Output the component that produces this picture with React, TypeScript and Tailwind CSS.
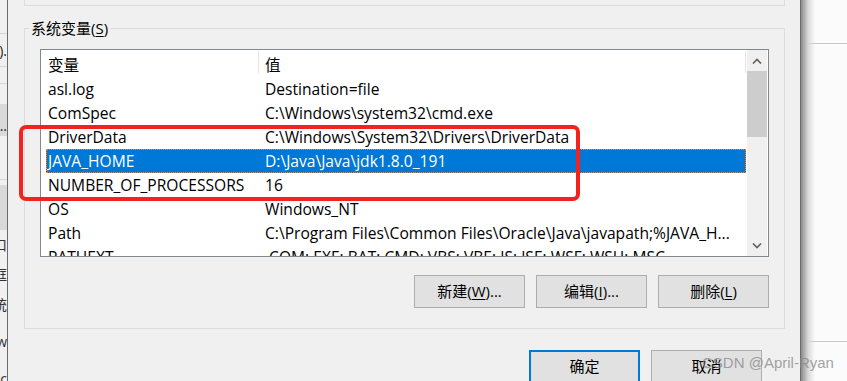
import React from 'react';

interface EnvVar {
  name: string;
  value: string;
}

const vars: EnvVar[] = [
  { name: 'asl.log', value: 'Destination=file' },
  { name: 'ComSpec', value: 'C:\\Windows\\system32\\cmd.exe' },
  { name: 'DriverData', value: 'C:\\Windows\\System32\\Drivers\\DriverData' },
  { name: 'JAVA_HOME', value: 'D:\\Java\\Java\\jdk1.8.0_191' },
  { name: 'NUMBER_OF_PROCESSORS', value: '16' },
  { name: 'OS', value: 'Windows_NT' },
  { name: 'Path', value: 'C:\\Program Files\\Common Files\\Oracle\\Java\\javapath;%JAVA_H...' },
  { name: 'PATHEXT', value: '.COM;.EXE;.BAT;.CMD;.VBS;.VBE;.JS;.JSE;.WSF;.WSH;.MSC' },
];

const SELECTED = 'JAVA_HOME';

function WinButton({ label, hotkey, suffix, primary }: { label: string; hotkey?: string; suffix?: string; primary?: boolean }) {
  return (
    <div
      className={`w-[111px] h-[33px] flex items-center justify-center text-[15px] text-black bg-[#e1e1e1] ${
        primary ? 'border-2 border-[#0078d7]' : 'border border-[#adadad]'
      }`}
    >
      <span>
        {label}
        {hotkey && (
          <>
            (<span className="underline underline-offset-2">{hotkey}</span>)
          </>
        )}
        {suffix}
      </span>
    </div>
  );
}

function ScrollArrow({ down }: { down?: boolean }) {
  return (
    <div className="h-[21px] flex items-center justify-center">
      <svg width="10" height="6" viewBox="0 0 10 6" className={down ? 'rotate-180' : ''}>
        <path d="M1 5.5 L5 1.5 L9 5.5" fill="none" stroke="#606060" strokeWidth="1.6" />
      </svg>
    </div>
  );
}

function BackWindow() {
  // sliver of the window behind the dialog, on the left edge
  return (
    <div className="w-[7px] h-full bg-[#f0f0f0] flex flex-col overflow-hidden text-[14px] text-[#222]">
      <div className="h-[34px] border-b border-[#d6d6d6] shrink-0" />
      <div className="h-[33px] border-b border-[#d6d6d6] shrink-0 flex justify-end items-center whitespace-nowrap">
        <span>(S).</span>
      </div>
      <div className="h-[17px] border-b border-[#d6d6d6] shrink-0" />
      <div className="h-[20px] shrink-0" />
      <div className="h-[32px] bg-[#d9d9d9] shrink-0 flex justify-end items-end whitespace-nowrap leading-[20px]">
        <span>...</span>
      </div>
      <div className="h-[44px] border-b border-[#d6d6d6] shrink-0" />
      <div className="h-[5px] shrink-0" />
      <div className="h-[45px] bg-[#d9d9d9] shrink-0" />
      <div className="flex flex-col items-end whitespace-nowrap leading-[30px] text-[#333]">
        <span>窗口</span>
        <span>量框</span>
        <span>系统</span>
        <span className="leading-[44px]">w</span>
        <span>c</span>
      </div>
    </div>
  );
}

export default function App() {
  return (
    <div className="relative w-[847px] h-[381px] overflow-hidden flex bg-white font-['Segoe_UI','Open_Sans','Noto_Sans_CJK_SC',sans-serif] text-[15.6px]">
      <BackWindow />

      {/* dialog */}
      <div className="w-[794px] h-full shrink-0 bg-[#f0f0f0] border-l border-r border-[#6b6b6b] pl-[16px] pr-[15px] flex flex-col">
        {/* bottom of the user variables group box */}
        <div className="h-[6px] border-l border-r border-b border-[#dcdcdc] shrink-0" />

        <fieldset className="mt-[12px] h-[311px] border border-[#dcdcdc] px-[15px] shrink-0">
          <legend className="-ml-[11px] px-[2px] leading-[20px] text-[15px] text-black">
            系统变量(<span className="underline underline-offset-2">S</span>)
          </legend>

          <div className="mt-[11px] h-[208px] border border-[#828790] bg-white flex">
            <div className="flex-1 overflow-hidden flex flex-col text-black">
              {/* header */}
              <div className="h-[27px] shrink-0 flex pt-[4px] leading-[23px]">
                <div className="w-[217px] pl-[7px]">变量</div>
                <div className="w-px h-[22px] -mt-[3px] bg-[#e5e5e5]" />
                <div className="w-[486px] pl-[6px]">值</div>
                <div className="w-px h-[22px] -mt-[3px] bg-[#e5e5e5]" />
              </div>

              {/* rows */}
              <div className="pl-[5px] pr-[1px]">
                {vars.map((v) => {
                  const selected = v.name === SELECTED;
                  return (
                    <div
                      key={v.name}
                      className={`h-[24px] flex leading-[22px] border whitespace-nowrap ${
                        selected
                          ? 'bg-[#0078d7] text-white border-dotted border-[#ff8728]'
                          : 'border-transparent'
                      }`}
                    >
                      <div className="w-[218px] pl-[1px] overflow-hidden">{v.name}</div>
                      <div className="flex-1 overflow-hidden">{v.value}</div>
                    </div>
                  );
                })}
              </div>
            </div>

            {/* vertical scrollbar */}
            <div className="w-[20px] mr-px bg-[#f0f0f0] flex flex-col shrink-0">
              <ScrollArrow />
              <div className="h-[66px] bg-[#cdcdcd]" />
              <div className="flex-1" />
              <ScrollArrow down />
            </div>
          </div>

          <div className="mt-[18px] flex justify-end gap-[11px]">
            <WinButton label="新建" hotkey="W" suffix="..." />
            <WinButton label="编辑" hotkey="I" suffix="..." />
            <WinButton label="删除" hotkey="L" />
          </div>
        </fieldset>

        <div className="mt-[21px] pr-[23px] flex justify-end gap-[11px]">
          <WinButton label="确定" primary />
          <WinButton label="取消" />
        </div>
      </div>

      {/* desktop / window behind on the right */}
      <div className="relative flex-1 h-full bg-[#fbfbfb] flex flex-col">
        <div className="h-[44px] border-b border-[#c8c8c8] shrink-0" />
        <div className="h-[298px] border-b border-[#c8c8c8] shrink-0" />
        <div className="absolute inset-y-0 left-0 w-[14px] bg-gradient-to-r from-[#8c8c8c] via-[#d8d8d8] to-transparent" />
      </div>

      {/* red highlight box */}
      <div className="absolute left-[19px] top-[125px] w-[561px] h-[76px] border-[4px] border-[#f3221d] rounded-[7px] pointer-events-none" />

      {/* watermark */}
      <div className="absolute left-[702px] top-[353px] font-['Liberation_Sans',sans-serif] text-[15px] leading-[20px] text-[#8a8a8a]/80 whitespace-nowrap">
        CSDN @April-Ryan
      </div>
    </div>
  );
}
